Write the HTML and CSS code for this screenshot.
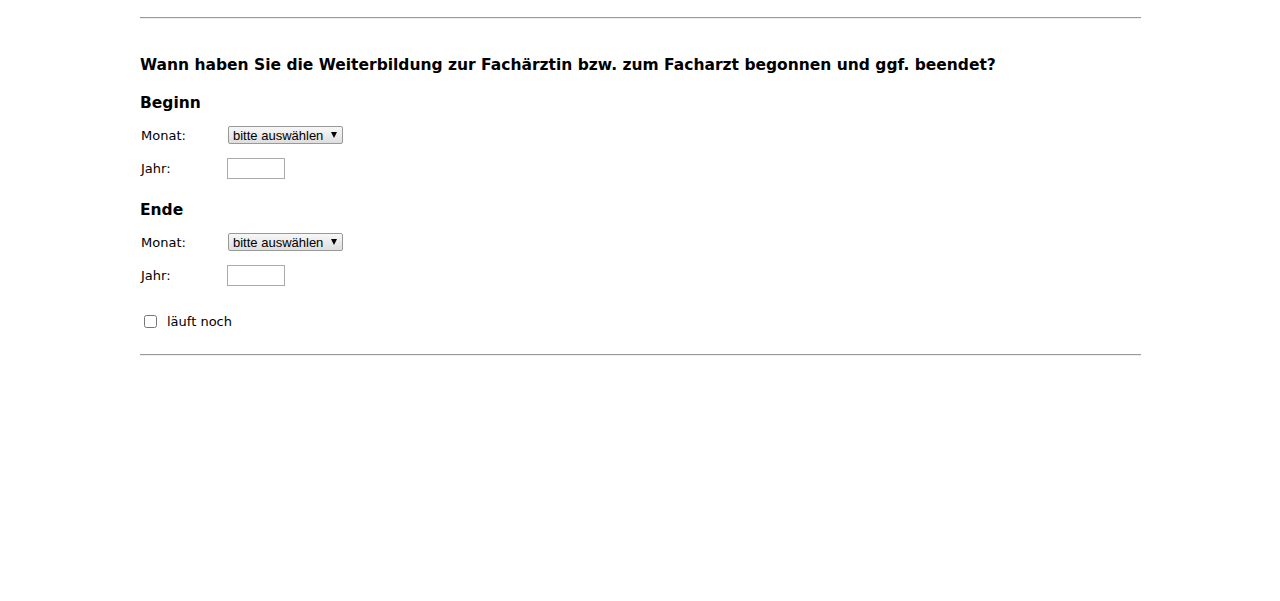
FILE: index.html
```html
<!DOCTYPE html>
<html lang="de">
<head>
    <meta charset="UTF-8">
    <title>Weiterbildung</title>
    <link rel="stylesheet" href="styles.css">
</head>
<body>
    <div class="container">
        <hr>
        <h2>Wann haben Sie die Weiterbildung zur Fachärztin bzw. zum Facharzt begonnen und ggf. beendet?</h2>

        <h3>Beginn</h3>
        <div class="row">
            <label for="startMonth">Monat:</label>
            <span class="select-wrap">
                <select id="startMonth">
                    <option value="">bitte auswählen</option>
                    <option>Januar</option>
                    <option>Februar</option>
                    <option>März</option>
                </select>
            </span>
        </div>
        <div class="row">
            <label for="startYear">Jahr:</label>
            <input type="text" id="startYear" class="year">
        </div>

        <h3>Ende</h3>
        <div class="row">
            <label for="endMonth">Monat:</label>
            <span class="select-wrap">
                <select id="endMonth">
                    <option value="">bitte auswählen</option>
                    <option>Januar</option>
                    <option>Februar</option>
                    <option>März</option>
                </select>
            </span>
        </div>
        <div class="row">
            <label for="endYear">Jahr:</label>
            <input type="text" id="endYear" class="year">
        </div>

        <div class="check-row">
            <input type="checkbox" id="running">
            <label for="running">läuft noch</label>
        </div>
        <hr>
    </div>
</body>
</html>
```

FILE: styles.css
```css
body {
    margin: 0;
    font-family: "DejaVu Sans", Verdana, sans-serif;
    color: #000;
    background: #fff;
}
.container {
    width: 1001px;
    margin: 0 auto;
    padding-top: 17px;
    padding-left: 1px;
}
hr {
    margin: 0;
    height: 0;
    border: 0;
    border-top: 1px solid #999;
    border-bottom: 1px solid #eee;
}
h2 {
    font-size: 15.5px;
    line-height: 20px;
    margin: 36px 0 18px;
}
h3 {
    font-size: 15.5px;
    line-height: 20px;
    margin: 0 0 11px;
}
.row {
    display: flex;
    align-items: center;
    height: 22px;
    margin-bottom: 11px;
    font-size: 13px;
}
.row + h3 {
    margin-top: 21px;
}
.row label {
    width: 86px;
    padding-left: 1px;
}
.select-wrap {
    position: relative;
    display: inline-block;
    margin-left: 1px;
}
.select-wrap::after {
    content: "";
    position: absolute;
    right: 6px;
    top: 6px;
    border-left: 3px solid transparent;
    border-right: 3px solid transparent;
    border-top: 6px solid #000;
    pointer-events: none;
}
select {
    appearance: none;
    -webkit-appearance: none;
    width: 115px;
    height: 18px;
    padding: 0 0 0 4px;
    font-family: "Liberation Sans", Arial, sans-serif;
    font-size: 13px;
    color: #000;
    border: 1px solid #999;
    border-radius: 2px;
    background: linear-gradient(#f7f7f7, #dedede);
}
.year {
    width: 58px;
    height: 21px;
    box-sizing: border-box;
    border: 1px solid #aaa;
    padding: 0 3px;
    margin: 0;
}
.check-row {
    display: flex;
    align-items: center;
    height: 22px;
    margin: 24px 0 22px;
    font-size: 13px;
}
.check-row input {
    width: 13px;
    height: 13px;
    margin: 0 10px 0 4px;
}
```
